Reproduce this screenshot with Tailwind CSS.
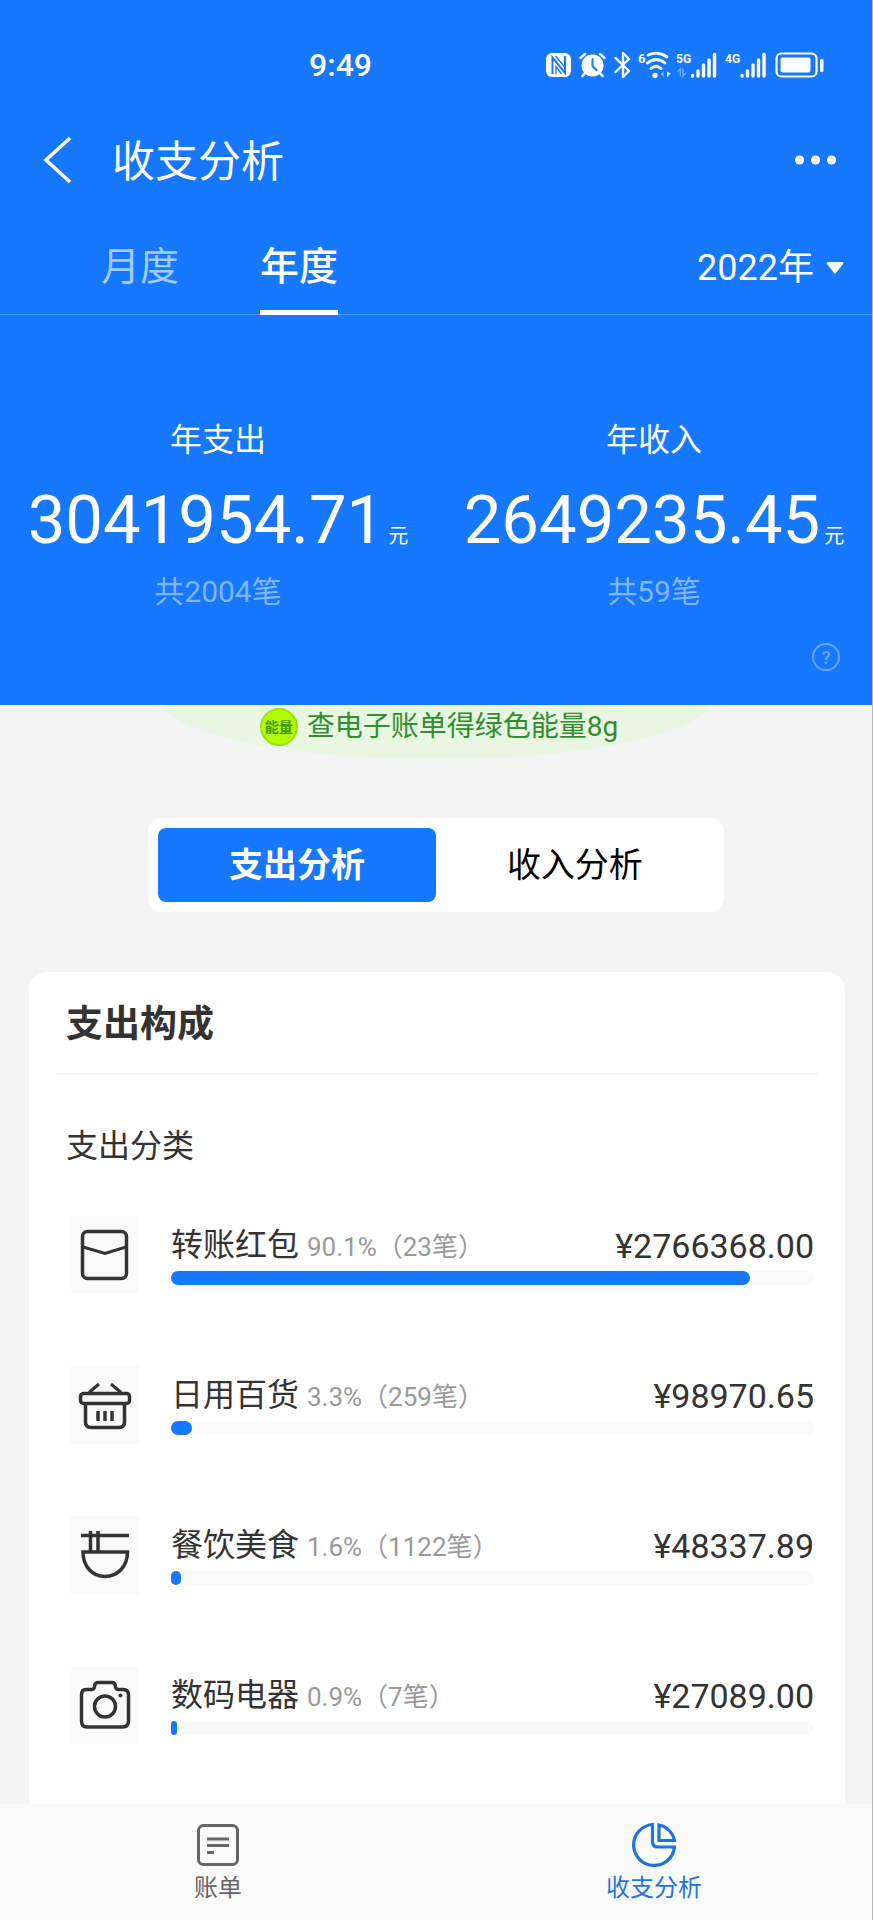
<!DOCTYPE html>
<html lang="zh-CN">
<head>
<meta charset="utf-8">
<meta name="viewport" content="width=device-width, initial-scale=1">
<title>收支分析</title>
<script src="https://cdn.jsdelivr.net/npm/@tailwindcss/browser@4"></script>
</head>
<body class="flex min-h-screen flex-col border-r border-[#b5b5b8] bg-[#f4f4f4] font-['Roboto','Noto_Sans_CJK_SC',sans-serif] text-[#333]">

<header class="bg-[#1677ff] text-white">
  <!-- Status bar -->
  <div class="flex h-[130px] items-center justify-between pr-[48px] pl-[309px]">
    <span class="text-[32px] leading-10 font-medium">9:49</span>
    <div class="flex items-center gap-2">
      <svg class="h-[26px] w-[25px]" viewBox="0 0 25 26" fill="none"><rect x="0" y="1" width="25" height="24" rx="6" fill="#fff"/><path d="M6.500 22V5.500L19 21V4" stroke="#1677ff" stroke-width="2"/><path d="M9.500 4L19 15.500M10 22V14.500L15.500 22" stroke="#1677ff" stroke-width="1.300"/></svg>
      <svg class="h-[26px] w-[27px]" viewBox="0 0 27 26" fill="none" stroke="#fff" stroke-linecap="round"><circle cx="13.500" cy="13.500" r="11" fill="#fff" stroke="none"/><path d="M1.500 6L6 2M25.500 6L21 2M6 21L3.500 24M21 21L23.500 24" stroke-width="2.500"/><path d="M13.500 7V14L17.500 18" stroke="#1677ff" stroke-width="2"/></svg>
      <svg class="h-[28px] w-[17px]" viewBox="0 0 17 28" fill="none" stroke="#fff" stroke-width="2.400" stroke-linejoin="round" stroke-linecap="round"><path d="M1.500 7L15 20L9 26V2L15 8L1.500 21"/></svg>
      <svg class="h-[28px] w-[30px] overflow-visible" viewBox="0 0 30 28" fill="none" stroke="#fff" stroke-width="2.800" stroke-linecap="round"><text x="-1" y="12" fill="#fff" stroke="none" font-size="13" font-weight="700">6</text><path d="M9 4Q19 -.5 28 6M8.500 12Q17 5 26 12M12 17.500Q17 13 22 17.500"/><circle cx="16" cy="24.500" r="2.700" fill="#fff" stroke="none"/><path d="M22 23L24.500 20.500V26Z" fill="#8fc0ff" stroke="none"/><path d="M28 20.500V26.500L31.500 22.500Z" fill="#fff" stroke="none"/></svg>
      <svg class="h-[28px] w-[40px]" viewBox="0 0 40 28" fill="none" stroke="#fff" stroke-width="3.400" stroke-linecap="round"><text x="-1" y="12" fill="#fff" stroke="none" font-size="12" font-weight="700">5G</text><path d="M1 20.500L3.500 18V25M6 18V25L8.500 22.500" stroke="#6aa9ff" stroke-width="1.500"/><path d="M15.500 24.500V25M21 20V25M26.500 14V25M32 9V25M37.500 3.500V25"/></svg>
      <svg class="h-[28px] w-[42px]" viewBox="0 0 42 28" fill="none" stroke="#fff" stroke-width="3.400" stroke-linecap="round"><text x="0" y="12" fill="#fff" stroke="none" font-size="12" font-weight="700">4G</text><path d="M17 24.500V25M22.500 20V25M28 14V25M33.500 9V25M39 3.500V25"/></svg>
      <svg class="h-[26px] w-[49px]" viewBox="0 0 49 26" fill="none"><rect x="1.500" y="1.500" width="40" height="23" rx="5" stroke="#fff" stroke-width="2.200"/><rect x="5.500" y="5.500" width="30" height="15" rx="2" fill="#fff"/><rect x="45" y="7" width="3.500" height="13" rx="1.500" fill="#fff"/></svg>
    </div>
  </div>

  <!-- Title bar -->
  <div class="flex h-[60px] items-center pr-[36px] pl-[42px]">
    <button type="button" aria-label="返回" class="mr-[40px]"><svg class="h-[48px] w-[30px]" viewBox="0 0 30 48" fill="none" stroke="#fff" stroke-width="3.500"><path d="M28 2L4 24L28 46"/></svg></button>
    <h1 class="flex-1 pt-1 text-[43px] leading-[56px] font-normal">收支分析</h1>
    <button type="button" aria-label="更多"><svg class="h-[10px] w-[41px]" viewBox="0 0 41 10" fill="#fff"><circle cx="4.500" cy="5" r="4.500"/><circle cx="20.500" cy="5" r="4.500"/><circle cx="36.500" cy="5" r="4.500"/></svg></button>
  </div>

  <!-- Period tabs -->
  <div class="flex h-[125px] items-stretch justify-between border-b border-[#4d9aff] pr-[28px] pl-[101px]">
    <nav class="flex gap-[81px] text-[39px] leading-[56px]">
      <button type="button" class="flex items-start pt-[49px] text-[#a3cbff]">月度</button>
      <button type="button" class="relative flex items-start pt-[49px] font-medium">年度<span class="absolute inset-x-0 -bottom-px h-[5px] bg-white"></span></button>
    </nav>
    <button type="button" class="flex items-center gap-3 pt-8 text-[36px] leading-[56px]">2022年<svg class="h-[12px] w-[18px]" viewBox="0 0 18 12" fill="#fff"><path d="M1.500 0H16.500Q18 .5 17 2L10 11Q9 12 8 11L1 2Q0 .5 1.500 0Z"/></svg></button>
  </div>

  <!-- Yearly totals -->
  <div class="grid grid-cols-2 pt-[101px] text-center">
    <section>
      <h2 class="text-[32px] leading-12 font-normal">年支出</h2>
      <p class="mt-[12px] text-[67px] leading-[88px]">3041954.71<span class="ml-1 text-[20px] leading-none">元</span></p>
      <p class="mt-[4px] text-[30px] leading-[48px] text-[#80b5ff]">共2004笔</p>
    </section>
    <section>
      <h2 class="text-[32px] leading-12 font-normal">年收入</h2>
      <p class="mt-[12px] text-[67px] leading-[88px]">2649235.45<span class="ml-1 text-[20px] leading-none">元</span></p>
      <p class="mt-[4px] text-[30px] leading-[48px] text-[#80b5ff]">共59笔</p>
    </section>
  </div>
  <div class="flex h-[89px] justify-end pt-[27px] pr-[32px]">
    <button type="button" aria-label="说明" class="flex h-[28px] w-[28px] items-center justify-center rounded-full border-2 border-[#64a6ff] text-[19px] leading-none font-medium text-[#64a6ff]">?</button>
  </div>
</header>

<main class="flex flex-1 flex-col">
  <!-- Green energy notice -->
  <div class="relative flex h-[54px] justify-center overflow-hidden">
    <div class="absolute bottom-0 left-1/2 h-[120px] w-[550px] -translate-x-1/2 rounded-[50%] bg-[#e9f6e1]"></div>
    <a href="#" class="relative flex h-[44px] items-center gap-[9px] pl-1.5 text-[28px] leading-10 text-[#2f8f2f]">
      <span class="flex h-[38px] w-[38px] items-center justify-center rounded-full border-2 border-[#98e412] bg-[#b4fb08] text-[14px] font-bold text-[#3f9a10]">能量</span>查电子账单得绿色能量8g</a>
  </div>

  <!-- Expense / income switch -->
  <div class="mx-auto mt-[59px] flex h-[94px] w-[66%] rounded-[14px] bg-white p-[10px] text-[34px] leading-12">
    <button type="button" class="flex-1 rounded-lg bg-[#1677ff] font-bold text-white">支出分析</button>
    <button type="button" class="flex-1 text-black">收入分析</button>
  </div>

  <!-- Expense breakdown -->
  <section class="mr-[27px] ml-[29px] mt-[60px] flex-1 rounded-t-[18px] bg-white px-[27px]">
    <h2 class="border-b-2 border-[#f4f4f4] pt-[26px] pb-[21px] pl-[10px] text-[37px] leading-[54px] font-bold">支出构成</h2>
    <div class="pr-1 pl-[10px]">
      <h3 class="pt-[47px] text-[32px] leading-[48px] font-normal">支出分类</h3>
      <ul class="mt-[46px] flex flex-col gap-[72px] pl-1">
        <li class="flex h-[78px] items-start gap-[32px]">
          <span class="flex h-[78px] w-[69px] items-center justify-center bg-[#fafafa]"><svg class="h-[52px] w-[54px]" viewBox="0 0 54 52" fill="none" stroke="#333" stroke-width="3.500"><rect x="4.500" y="2.500" width="44" height="47" rx="5"/><path d="M5 18L27 24.500L48 18" stroke-width="3"/></svg></span>
          <div class="flex-1 pt-[4px]">
            <div class="flex h-[51px] items-center justify-between"><p class="text-[32px] leading-[48px]">转账红包 <span class="text-[26px] text-[#999]">90.1%（23笔）</span></p><p class="text-[34px] leading-[48px]">¥2766368.00</p></div>
            <div class="h-[14px] rounded-full bg-[#fafafa]"><div class="h-full rounded-full bg-[#1677ff]" style="width:90.1%"></div></div>
          </div>
        </li>
        <li class="flex h-[78px] items-start gap-[32px]">
          <span class="flex h-[78px] w-[69px] items-center justify-center bg-[#fafafa]"><svg class="h-[52px] w-[54px]" viewBox="0 0 54 52" fill="none" stroke="#333" stroke-width="3.500"><path d="M11 13.500L21 5M43 13.500L33 5" stroke-width="3"/><rect x="2.500" y="14.500" width="49" height="10" rx="3"/><path d="M7.500 25V43Q7.500 48.500 13 48.500H41Q46.500 48.500 46.500 43V25M20 32V42M27 32V42M34 32V42"/></svg></span>
          <div class="flex-1 pt-[4px]">
            <div class="flex h-[51px] items-center justify-between"><p class="text-[32px] leading-[48px]">日用百货 <span class="text-[26px] text-[#999]">3.3%（259笔）</span></p><p class="text-[34px] leading-[48px]">¥98970.65</p></div>
            <div class="h-[14px] rounded-full bg-[#fafafa]"><div class="h-full rounded-full bg-[#1677ff]" style="width:3.3%"></div></div>
          </div>
        </li>
        <li class="flex h-[78px] items-start gap-[32px]">
          <span class="flex h-[78px] w-[69px] items-center justify-center bg-[#fafafa]"><svg class="h-[52px] w-[54px]" viewBox="0 0 54 52" fill="none" stroke="#333" stroke-width="3.500"><path d="M3 6.500H51M12.500 2V23M20 2V23M5 23H49.500C49.500 37 40 47.500 27 47.500S5 37 5 23Z"/></svg></span>
          <div class="flex-1 pt-[4px]">
            <div class="flex h-[51px] items-center justify-between"><p class="text-[32px] leading-[48px]">餐饮美食 <span class="text-[26px] text-[#999]">1.6%（1122笔）</span></p><p class="text-[34px] leading-[48px]">¥48337.89</p></div>
            <div class="h-[14px] rounded-full bg-[#fafafa]"><div class="h-full rounded-full bg-[#1677ff]" style="width:1.6%"></div></div>
          </div>
        </li>
        <li class="flex h-[78px] items-start gap-[32px]">
          <span class="flex h-[78px] w-[69px] items-center justify-center bg-[#fafafa]"><svg class="h-[52px] w-[54px]" viewBox="0 0 54 52" fill="none" stroke="#333" stroke-width="3.500"><path d="M8 10.500H14Q16 10.500 16.500 7.500Q17 3.500 20 3.500H34Q37 3.500 37.500 7.500Q38 10.500 40 10.500H45Q50.500 10.500 50.500 16V42Q50.500 48 44.500 48H9Q3.500 48 3.500 42V16Q3.500 10.500 8 10.500Z"/><circle cx="27" cy="27.500" r="10.500"/><circle cx="42.500" cy="16.500" r="2" fill="#333" stroke="none"/></svg></span>
          <div class="flex-1 pt-[4px]">
            <div class="flex h-[51px] items-center justify-between"><p class="text-[32px] leading-[48px]">数码电器 <span class="text-[26px] text-[#999]">0.9%（7笔）</span></p><p class="text-[34px] leading-[48px]">¥27089.00</p></div>
            <div class="h-[14px] rounded-full bg-[#fafafa]"><div class="h-full rounded-full bg-[#1677ff]" style="width:0.9%"></div></div>
          </div>
        </li>
      </ul>
    </div>
  </section>
</main>

<nav class="grid h-[116px] grid-cols-2 bg-[#fafafa] text-[24px] leading-9">
  <a href="#" class="flex flex-col items-center pt-[18px] text-[#666]"><svg class="mb-[2px] h-[46px] w-[46px]" viewBox="0 0 46 46" fill="none" stroke="currentColor" stroke-width="3"><rect x="3.500" y="3.500" width="39" height="39" rx="5"/><path d="M12 17H34M12 23.500H34M12 30.500H19"/></svg>账单</a>
  <a href="#" aria-current="page" class="flex flex-col items-center pt-[18px] text-[#1f73dc]"><svg class="mb-[2px] h-[46px] w-[46px]" viewBox="0 0 46 46" fill="none" stroke="currentColor" stroke-width="3.200"><path d="M21.500 2.500A20.500 20.500 0 1 0 43.500 25H27Q21.500 25 21.500 19.500Z"/><path d="M28 3V18.500H43.500C42 11 36 4.500 28 3Z"/></svg>收支分析</a>
</nav>
</body>
</html>
